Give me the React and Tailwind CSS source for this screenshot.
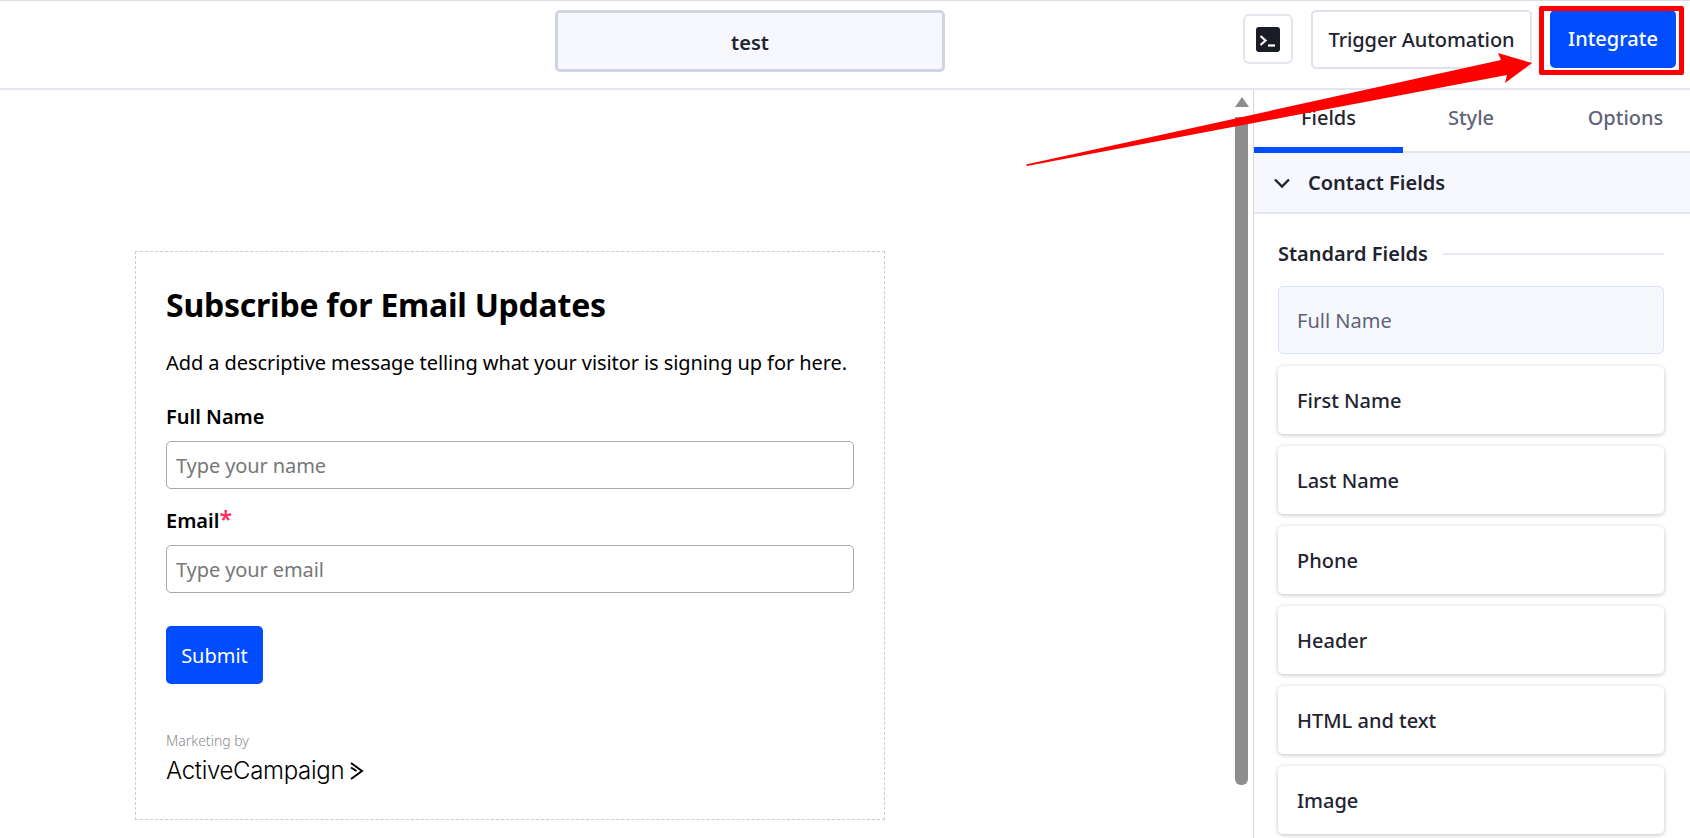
import React from "react";

const fields = ["First Name", "Last Name", "Phone", "Header", "HTML and text", "Image"];

const TerminalIcon = () => (
  <svg width="24" height="25" viewBox="0 0 24 25">
    <rect width="24" height="25" rx="3" fill="#1a1d26" />
    <path d="M4.5 9l5 4.5-5 4.5" fill="none" stroke="#fff" strokeWidth="2.2" />
    <path d="M12 18.5h7" fill="none" stroke="#fff" strokeWidth="2.2" />
  </svg>
);

const Field = ({ label, required, placeholder }) => (
  <div>
    <div className="pt-[1px] text-[20px] leading-[25px] font-semibold text-black">
      {label}
      {required && <span className="text-[23px] leading-[20px] text-[#ff2e63]">*</span>}
    </div>
    <input
      placeholder={placeholder}
      className="mt-[12px] block h-[48px] w-full rounded-[5px] border border-[#a9a9a9] px-[9px] text-[20px] tracking-[-0.1px] text-black outline-none placeholder:text-[#777]"
    />
  </div>
);

const App = () => {
  return (
    <div className="relative flex h-[838px] w-full flex-col overflow-hidden bg-white font-['Noto_Sans',sans-serif] text-[#1f2430]">
      {/* Top bar */}
      <div className="flex h-[90px] shrink-0 items-start border-t border-b-2 border-t-[#ddd] border-b-[#e3e6ee] pt-[9px] pr-[14px] pl-[555px]">
        <div className="flex h-[62px] w-[390px] items-center justify-center rounded-[5px] border-[3px] border-[#cfd6e2] bg-[#f7f8fd] pt-[3px] text-[20px] font-semibold">
          test
        </div>
        <div className="ml-auto flex items-start">
          <button className="mt-[4px] flex h-[50px] w-[50px] items-center justify-center rounded-[6px] border-2 border-[#e3e6ee]">
            <TerminalIcon />
          </button>
          <button className="ml-[18px] h-[59px] w-[221px] rounded-[5px] border-2 border-[#dfe3ec] text-[20px] font-medium tracking-[-0.1px]">
            Trigger Automation
          </button>
          <button className="ml-[18px] h-[58px] w-[126px] rounded-[5px] bg-[#004cff] text-[20px] font-medium text-white">
            Integrate
          </button>
        </div>
      </div>

      <div className="flex min-h-0 flex-1">
        {/* Canvas */}
        <div className="w-[1235px] shrink-0 pt-[161px] pl-[135px]">
          <div className="h-[569px] w-[750px] border border-dashed border-[#ccc] pt-[33px] pr-[30px] pl-[30px]">
            <h1 className="text-[32px] leading-[40px] font-bold tracking-[-0.24px] text-black">
              Subscribe for Email Updates
            </h1>
            <p className="mt-[25px] text-[20px] leading-[26px] tracking-[-0.08px] text-black">
              Add a descriptive message telling what your visitor is signing up for here.
            </p>
            <div className="mt-[27px]">
              <Field label="Full Name" placeholder="Type your name" />
            </div>
            <div className="mt-[18px]">
              <Field label="Email" required placeholder="Type your email" />
            </div>
            <button className="mt-[33px] h-[58px] w-[97px] rounded-[5px] bg-[#004cff] pt-[1px] text-[20px] text-white">
              Submit
            </button>
            <div className="mt-[48px] text-[14px] leading-[18px] font-light text-[#8b8b8b]">Marketing by</div>
            <div className="mt-[5px] flex items-center font-['Inter',sans-serif] text-[24px] leading-[32px] font-light tracking-[-0.32px] text-black">
              ActiveCampaign
              <svg className="ml-[6px]" width="14" height="18" viewBox="0 0 14 18">
                <path d="M1 1l11 8-11 8M1 5.5l5.5 3.5" fill="none" stroke="#000" strokeWidth="2" />
              </svg>
            </div>
          </div>
        </div>

        {/* Scrollbar */}
        <div className="flex w-[13px] shrink-0 flex-col items-center pt-[7px]">
          <div className="h-0 w-0 border-x-[7px] border-b-[10px] border-x-transparent border-b-[#8d8d8d]" />
          <div className="mt-[10px] h-[668px] w-[13px] rounded-b-[6px] bg-[#8d8d8d]" />
        </div>

        {/* Right panel */}
        <div className="ml-[5px] min-w-0 flex-1 border-l border-[#d5d6e0]">
          <div className="flex h-[63px] border-b-2 border-[#e3e6ee] text-[20px] font-medium">
            <div className="flex w-[149px] -mb-[2px] items-center justify-center border-b-[6px] border-[#004cff] pb-[2px]">
              Fields
            </div>
            <div className="flex w-[136px] items-center justify-center pb-[6px] text-[#5f6478]">Style</div>
            <div className="flex flex-1 items-center justify-center pb-[6px] pl-[22px] text-[#5f6478]">Options</div>
          </div>
          <div className="flex h-[61px] items-center border-b-2 border-[#e3e6ee] bg-[#f7f8fd] pl-[19px] text-[20px] font-semibold">
            <svg width="18" height="18" viewBox="0 0 18 18">
              <path d="M2 5.5l7 7 7-7" fill="none" stroke="#1f2430" strokeWidth="2.4" />
            </svg>
            <span className="ml-[17px]">Contact Fields</span>
          </div>
          <div className="pt-[27px] pr-[26px] pl-[24px]">
            <div className="flex items-center text-[20px] leading-[26px] font-semibold">
              Standard Fields
              <div className="ml-[15px] h-[2px] flex-1 bg-[#e6e8f2]" />
            </div>
            <div className="mt-[19px] flex h-[68px] items-center rounded-[5px] border border-[#d9e2fb] bg-[#f7f8fd] pt-[2px] pl-[18px] text-[20px] text-[#5f6478]">
              Full Name
            </div>
            {fields.map((name) => (
              <div
                key={name}
                className="mt-[12px] flex h-[68px] items-center rounded-[5px] bg-white pt-[2px] pl-[19px] text-[20px] font-medium shadow-[0_1px_4px_rgba(31,36,48,0.28)]"
              >
                {name}
              </div>
            ))}
          </div>
        </div>
      </div>

      {/* Annotation: red frame and arrow */}
      <div className="absolute top-[6px] left-[1539px] h-[69px] w-[145px] rounded-[2px] border-[5px] border-[#ff0000]" />
      <svg className="absolute top-0 left-0" width="1690" height="200" viewBox="0 0 1690 200">
        <polygon points="1026,164.5 1501,60 1498,53 1532,63 1505,83 1507,75 1027,166" fill="#ff0000" />
      </svg>
    </div>
  );
};

export default App;
